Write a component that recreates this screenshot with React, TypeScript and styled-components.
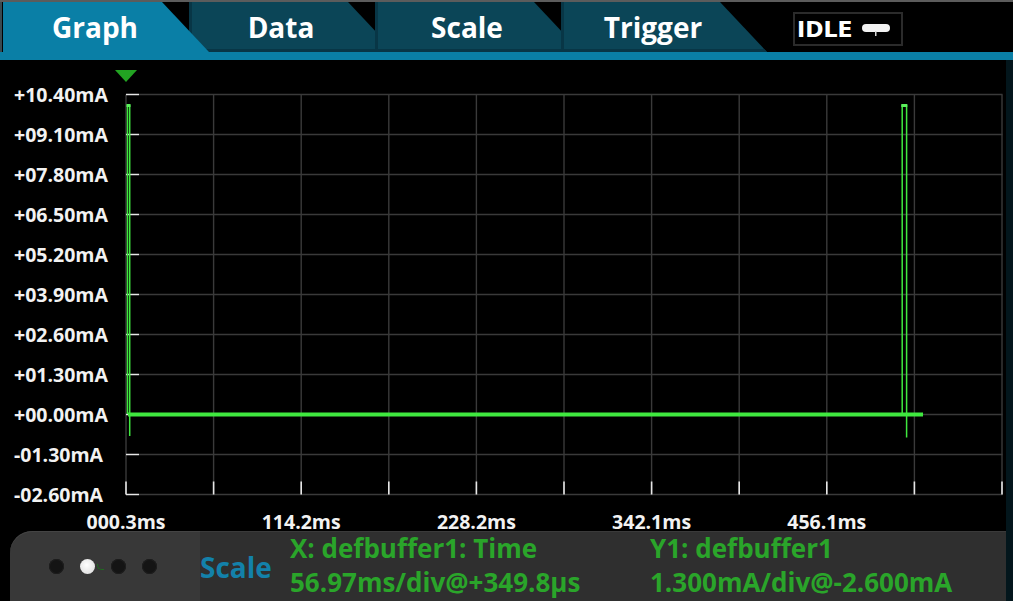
import React from "react";
import styled, { createGlobalStyle } from "styled-components";

const Global = createGlobalStyle`
  html, body { margin: 0; padding: 0; background: #000; }
  body { width: 1013px; height: 601px; overflow: hidden; font-family: "Open Sans", "Noto Sans", sans-serif; }
`;

const Screen = styled.div`
  width: 1013px;
  height: 601px;
  box-sizing: border-box;
  border-top: 2px solid #5c5c5c;
  background: #000;
  display: flex;
  flex-direction: column;
`;

const TabBar = styled.div`
  height: 50px;
  flex: none;
  display: flex;
  align-items: stretch;
  padding-left: 3px;
  box-shadow: inset 2px 0 0 #3a4a50;
`;

const Tab = styled.div<{ $active?: boolean }>`
  position: relative;
  z-index: ${(p) => (p.$active ? 2 : 1)};
  width: 206px;
  flex: none;
  margin-left: -20px;
  &:first-child { margin-left: 0; }
  clip-path: polygon(0 0, 159px 0, 206px 100%, 0 100%);
  background: ${(p) => (p.$active ? "#0a7fa6" : "#0b4557")};
  box-shadow: ${(p) => (p.$active ? "none" : "inset 3px -3px 0 #083646")};
  box-sizing: border-box;
  padding-right: 22px;
  display: flex;
  align-items: center;
  justify-content: center;
  color: #fff;
  font-weight: 700;
  font-size: 28px;
`;

const StatusBox = styled.div`
  margin-left: 26px;
  margin-top: 10px;
  width: 110px;
  height: 34px;
  box-sizing: border-box;
  border: 2px solid #2b2b2b;
  display: flex;
  align-items: center;
  gap: 8px;
  padding-left: 2px;
  color: #fff;
  font-family: "DejaVu Sans", sans-serif;
  font-weight: 700;
  font-size: 22px;
`;

const BlueStrip = styled.div`
  height: 8px;
  flex: none;
  background: #0a7fa6;
`;

const Body = styled.div`
  flex: 1;
  display: flex;
  min-height: 0;
`;

const MainColumn = styled.div`
  flex: 1;
  display: flex;
  flex-direction: column;
`;

const RightStrip = styled.div`
  width: 7px;
  flex: none;
  background: #03161c;
`;

const ChartArea = styled.div`
  height: 471px;
  flex: none;
  svg { display: block; overflow: visible; }
`;

const BottomPanel = styled.div`
  flex: 1;
  display: flex;
  padding-left: 10px;
`;

const DotsTab = styled.div`
  width: 190px;
  flex: none;
  background: #383838;
  border-top-left-radius: 22px;
  box-shadow: inset 0 1px 0 #444, 2px 0 0 #262626;
  display: flex;
  align-items: center;
  justify-content: center;
  gap: 16px;
  padding-right: 5px;
  box-sizing: border-box;
`;

const Dot = styled.span<{ $active?: boolean }>`
  position: relative;
  width: 15px;
  height: 15px;
  border-radius: 50%;
  background: ${(p) => (p.$active ? "radial-gradient(circle at 45% 40%, #ffffff, #d8d8d8)" : "#141414")};
  box-shadow: ${(p) => (p.$active ? "none" : "inset 0 0 0 1px #1e1e1e")};
  &::after {
    content: "";
    display: ${(p) => (p.$active ? "block" : "none")};
    position: absolute;
    left: 17px;
    top: 5px;
    width: 6px;
    height: 5px;
    border-bottom: 1px solid #1f6d1f;
    border-left: 1px solid #1f6d1f;
    border-bottom-left-radius: 5px;
  }
`;

const InfoPanel = styled.div`
  flex: 1;
  background: #2f2f2f;
  box-shadow: inset 0 1px 0 #3a3a3a;
  display: flex;
  align-items: center;
`;

const ScaleLabel = styled.div`
  width: 90px;
  flex: none;
  color: #1381aa;
  font-weight: 700;
  font-size: 28px;
`;

const Readout = styled.div<{ $width?: number }>`
  width: ${(p) => (p.$width ? `${p.$width}px` : "auto")};
  flex: none;
  display: flex;
  flex-direction: column;
  color: #2aa52a;
  font-weight: 700;
  font-size: 26px;
  line-height: 34px;
  white-space: nowrap;
  padding-bottom: 3px;
`;

const X0 = 126;
const X1 = 1002;
const DX = (X1 - X0) / 10;
const Y0 = 94.5;
const DY = 40;

const yLabels = [
  "+10.40mA", "+09.10mA", "+07.80mA", "+06.50mA", "+05.20mA", "+03.90mA",
  "+02.60mA", "+01.30mA", "+00.00mA", "-01.30mA", "-02.60mA",
];
const xLabels = ["000.3ms", "114.2ms", "228.2ms", "342.1ms", "456.1ms"];

const GRID = "#3a3a3a";
const TICK = "#e6e6e6";
const TRACE = "#3fe83f";

function Chart() {
  const idx = Array.from({ length: 11 }, (_, i) => i);
  const yBottom = Y0 + DY * 10;
  return (
    <svg width="1006" height="471" viewBox="0 60 1006 471">
      <rect x="0" y="60" width="1006" height="471" fill="#000" />
      {idx.map((k) => (
        <line key={`h${k}`} x1={X0} x2={X1 + 0.5} y1={Y0 + DY * k} y2={Y0 + DY * k} stroke={GRID} strokeWidth="1.4" />
      ))}
      {idx.map((k) => (
        <line key={`v${k}`} x1={X0 + DX * k} x2={X0 + DX * k} y1={Y0} y2={yBottom} stroke={GRID} strokeWidth="1.4" />
      ))}
      {idx.map((k) => (
        <line key={`lt${k}`} x1={X0} x2={X0 + 13} y1={Y0 + DY * k} y2={Y0 + DY * k} stroke={TICK} strokeWidth="1.4" />
      ))}
      {idx.map((k) => (
        <line key={`bt${k}`} x1={X0 + DX * k} x2={X0 + DX * k} y1={yBottom - 13} y2={yBottom} stroke={TICK} strokeWidth="1.6" />
      ))}
      <polygon points="115,70 137,70 126,82" fill="#22a322" />
      <line x1="128" x2="923" y1="414.5" y2="414.5" stroke={TRACE} strokeWidth="3.8" />
      <path d="M127.5 414 V105.5 H129.7 V436" fill="none" stroke={TRACE} strokeWidth="1.5" />
      <rect x="126.5" y="104" width="4" height="3" fill="#5cf05c" />
      <path d="M900 414 H902.2 V105.5 H906.6 V437.5" fill="none" stroke={TRACE} strokeWidth="1.5" />
      <rect x="901.3" y="104" width="6" height="3" fill="#5cf05c" />
      <g fill="#f2f2f2" fontFamily="'Open Sans', 'Noto Sans', sans-serif" fontWeight="700" fontSize="19.5">
        {yLabels.map((t, k) => (
          <text key={t} x="14" y={Y0 + DY * k + 7}>{t}</text>
        ))}
        {xLabels.map((t, k) => (
          <text key={t} x={X0 + DX * 2 * k} y="528.5" textAnchor="middle">{t}</text>
        ))}
      </g>
    </svg>
  );
}

function PillIcon() {
  return (
    <svg width="30" height="16" viewBox="0 0 30 16">
      <rect x="1" y="3" width="28" height="8" rx="4" fill="#f2f2f2" />
      <rect x="14" y="10" width="1.5" height="5" fill="#d8d8d8" />
    </svg>
  );
}

export default function App() {
  return (
    <>
      <Global />
      <Screen>
        <TabBar>
          <Tab $active>Graph</Tab>
          <Tab>Data</Tab>
          <Tab>Scale</Tab>
          <Tab>Trigger</Tab>
          <StatusBox>
            IDLE
            <PillIcon />
          </StatusBox>
        </TabBar>
        <BlueStrip />
        <Body>
          <MainColumn>
            <ChartArea>
              <Chart />
            </ChartArea>
            <BottomPanel>
              <DotsTab>
                <Dot />
                <Dot $active />
                <Dot />
                <Dot />
              </DotsTab>
              <InfoPanel>
                <ScaleLabel>Scale</ScaleLabel>
                <Readout $width={360}>
                  <span>X: defbuffer1: Time</span>
                  <span>56.97ms/div@+349.8µs</span>
                </Readout>
                <Readout>
                  <span>Y1: defbuffer1</span>
                  <span>1.300mA/div@-2.600mA</span>
                </Readout>
              </InfoPanel>
            </BottomPanel>
          </MainColumn>
          <RightStrip />
        </Body>
      </Screen>
    </>
  );
}
